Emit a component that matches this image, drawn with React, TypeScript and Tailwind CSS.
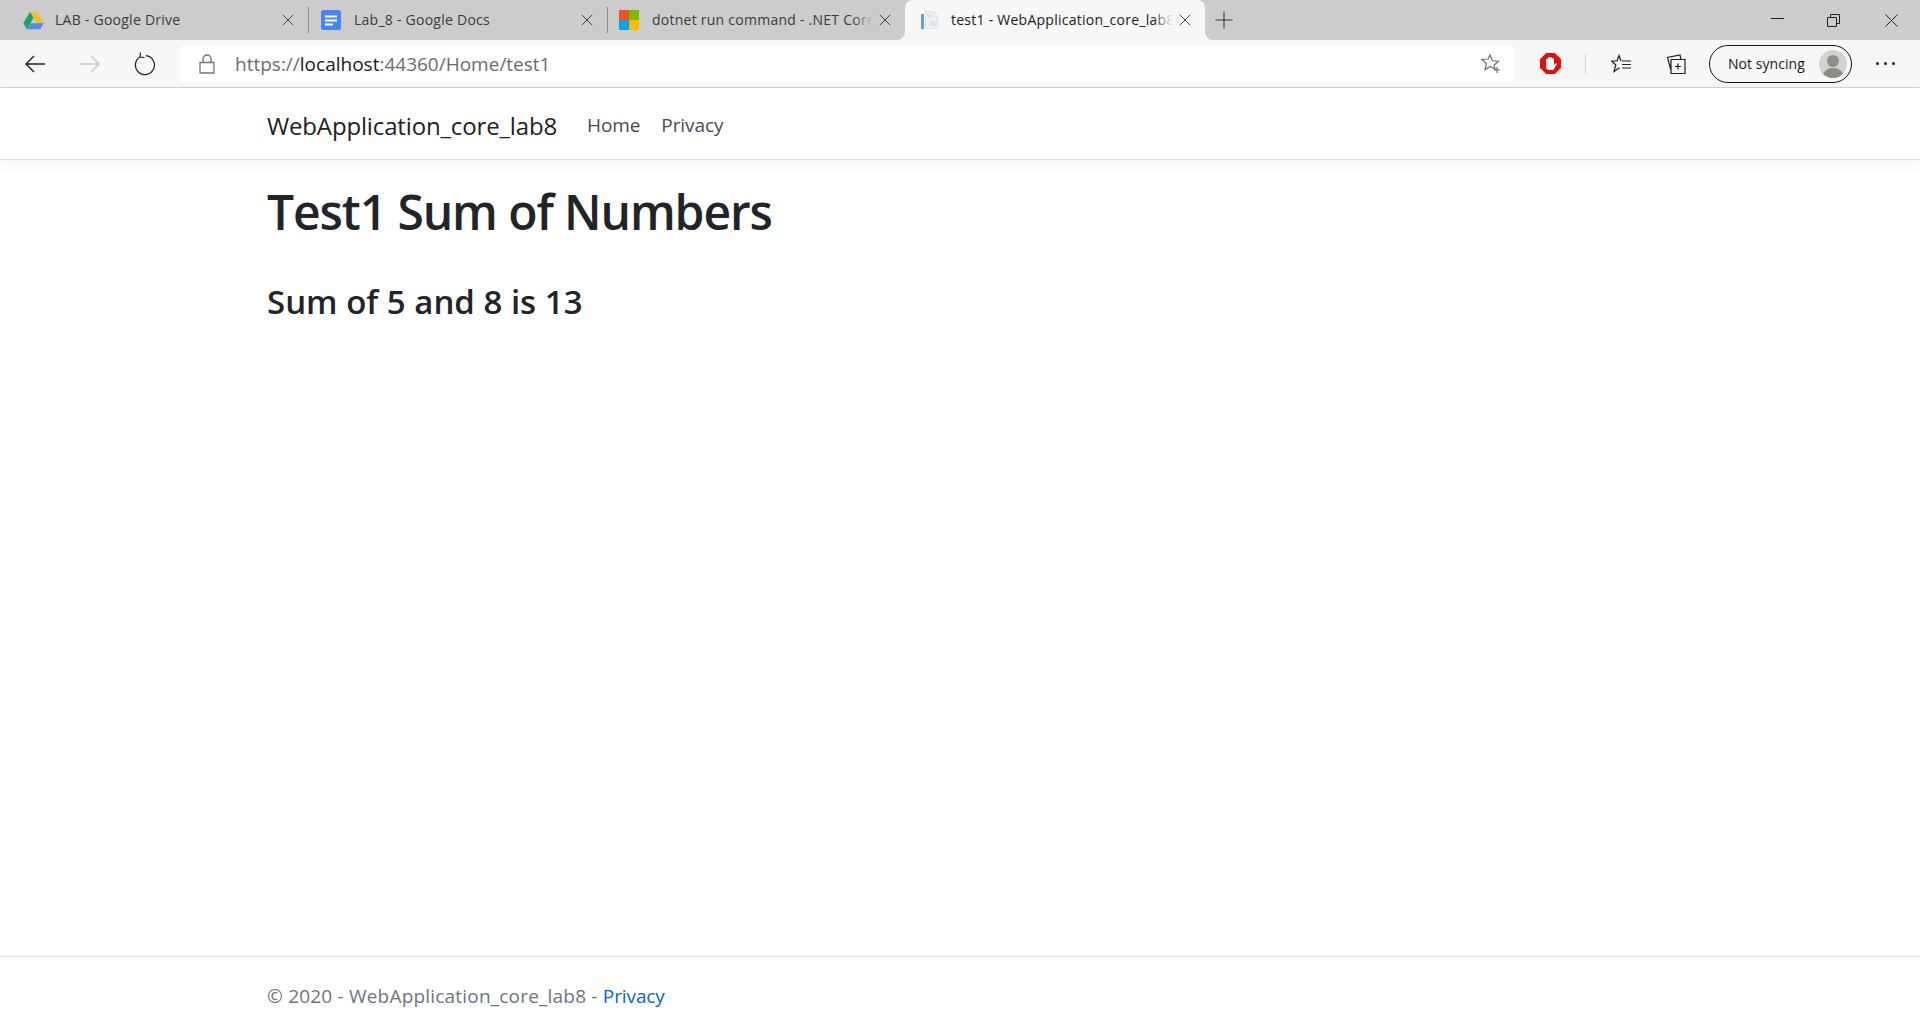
import { Plus, X } from "lucide-react";

const font = "font-['Open_Sans','Noto_Sans',sans-serif]";

function DriveIcon() {
  return (
    <svg width="21" height="19" viewBox="0 0 22 20">
      <path d="M7.3 1h7.4l7 11.8h-7.4z" fill="#f6c02c" />
      <path d="M7.300 1 .3 13l3.700 6.200 7-12z" fill="#1ea362" />
      <path d="M4 19.200h14l3.700-6.400H7.700z" fill="#4c8bf0" />
    </svg>
  );
}

function DocsIcon() {
  return (
    <svg width="20" height="20" viewBox="0 0 20 20">
      <rect width="20" height="20" rx="2.500" fill="#4285f4" />
      <path d="M4 5.500h12v2H4zM4 9.500h12v2H4zM4 13.500h8v2H4z" fill="#fff" />
    </svg>
  );
}

function MsIcon() {
  return (
    <svg width="20" height="20" viewBox="0 0 20 20">
      <rect width="10" height="10" fill="#f25022" />
      <rect x="10" width="10" height="10" fill="#7fba00" />
      <rect y="10" width="10" height="10" fill="#00a4ef" />
      <rect x="10" y="10" width="10" height="10" fill="#ffb900" />
    </svg>
  );
}

function PageIcon() {
  return (
    <svg width="19" height="20" viewBox="0 0 19 20">
      <path d="M5.500 1.500h8l4 3.500v13.500h-12z" fill="#eef0f3" stroke="#dfe3e8" />
      <rect x="1" y="4" width="3" height="15" fill="#5f9fd8" />
      <path d="M7 4h5v4H7zM10 11h6v5h-6z" fill="#dfe2e7" />
    </svg>
  );
}

function Tab({
  icon,
  title,
  active,
  size,
  slot,
}: {
  icon: React.ReactNode;
  title: string;
  active?: boolean;
  size: string;
  slot: string;
}) {
  return (
    <div className={`relative flex h-10 shrink-0 items-center pr-[10px] ${size} ${active ? "rounded-t-lg bg-[#f7f7f7]" : ""}`}>
      {active && (
        <>
          <div className="absolute bottom-0 -left-2 h-2 w-2 bg-[#f7f7f7]">
            <div className="h-2 w-2 rounded-br-lg bg-[#cccccc]" />
          </div>
          <div className="absolute -right-2 bottom-0 h-2 w-2 bg-[#f7f7f7]">
            <div className="h-2 w-2 rounded-bl-lg bg-[#cccccc]" />
          </div>
        </>
      )}
      <div className={`flex shrink-0 items-center ${slot}`}>{icon}</div>
      <div className="relative h-5 min-w-0 flex-1 overflow-hidden whitespace-nowrap text-[14px] leading-5 tracking-[0.25px] text-[#3b3b3b]">
        <span className={active ? "text-[#1a1a1a]" : ""}>{title}</span>
        <div className={`absolute inset-y-0 right-0 w-5 bg-gradient-to-r from-transparent ${active ? "to-[#f7f7f7]" : "to-[#cccccc]"}`} />
      </div>
      <X size={20} strokeWidth={1.100} className="ml-[2px] shrink-0 text-[#333333]" />
    </div>
  );
}

function Sep() {
  return <div className="h-[26px] w-px shrink-0 bg-[#8f8f8f]" />;
}

export default function App() {
  return (
    <div className={`flex h-[1022px] w-[1920px] flex-col overflow-hidden bg-white ${font}`}>
      {/* tab strip */}
      <div className="flex h-10 shrink-0 items-center bg-[#cccccc]">
        <Tab icon={<DriveIcon />} title="LAB - Google Drive" size="w-[308px]" slot="w-[55px] pl-[23px]" />
        <Sep />
        <Tab icon={<DocsIcon />} title="Lab_8 - Google Docs" size="w-[298px]" slot="w-[45px] pl-[12px]" />
        <Sep />
        <Tab icon={<MsIcon />} title="dotnet run command - .NET Core CLI" size="w-[297px]" slot="w-[44px] pl-[11px]" />
        <Tab icon={<PageIcon />} title="test1 - WebApplication_core_lab8" size="w-[300px]" slot="w-[46px] pl-[15px]" active />
        <Plus size={28} strokeWidth={0.9} className="ml-[5px] text-[#333333]" />
        <div className="ml-auto flex items-center pr-[22px] text-[#222222]">
          <svg width="13" height="13" viewBox="0 0 13 13" fill="none" stroke="currentColor">
            <path d="M0 4.500h13" />
          </svg>
          <svg className="ml-[43px]" width="13" height="13" viewBox="0 0 13 13" fill="none" stroke="currentColor">
            <path d="M.5 3.500h9v9h-9zM3.500 3.500v-3h9v9h-3" />
          </svg>
          <svg className="ml-[45px]" width="13" height="13" viewBox="0 0 13 13" fill="none" stroke="currentColor">
            <path d="M.5 .5l12 12M12.500 .5l-12 12" />
          </svg>
        </div>
      </div>

      {/* toolbar */}
      <div className="flex h-[48px] shrink-0 items-center border-b border-[#d2d2d2] bg-[#f7f7f7]">
        <div className="flex w-[180px] shrink-0 items-center pl-[24px]">
          <svg width="22" height="20" viewBox="0 0 22 20" fill="none" stroke="#1f1f1f" strokeWidth="1.400">
            <path d="M21 10H2M10 2l-8 8 8 8" />
          </svg>
          <svg className="ml-[33px]" width="22" height="20" viewBox="0 0 22 20" fill="none" stroke="#c8c8c8" strokeWidth="1.400">
            <path d="M1 10h19M12 2l8 8-8 8" />
          </svg>
          <svg className="ml-[33px]" width="22" height="24" viewBox="0 0 22 24" fill="none" stroke="#1f1f1f" strokeWidth="1.200">
            <path d="M6 5a9.500 9.500 0 1 0 6-1.300M6.500 .5 6 5l4.500 .5" />
          </svg>
        </div>
        <div className="flex h-[38px] w-[1335px] shrink-0 items-center rounded-[5px] bg-white">
          <svg className="ml-[19px]" width="16" height="20" viewBox="0 0 16 20" fill="none" stroke="#777777" strokeWidth="1.300">
            <path d="M1 8.500h14V19H1zM4 8.500V5a4 4 0 0 1 8 0v3.500" />
          </svg>
          <div className="ml-[20px] pt-[1px] text-[19px] leading-none text-[#6b6b6b]">
            https://<span className="text-[#1a1a1a]">localhost</span>:44360/Home/test1
          </div>
          <svg className="ml-auto mr-[13px]" width="22" height="22" viewBox="0 0 22 22" fill="none" stroke="#6f6f6f" strokeWidth="1.200">
            <path d="M10 2l2.400 5.800 6.200.5-4.700 4 1.300 4-5.200-2.900-5 3.300 1.500-6.200-4.700-4 6.200-.5zM14 17h6M17 14v6" />
          </svg>
        </div>
        <svg className="ml-[25px]" width="21" height="21" viewBox="0 0 21 21">
          <path d="M6.200 0h8.600L21 6.200v8.600L14.800 21H6.200L0 14.800V6.200z" fill="#e40c0c" />
          <path d="M6 9.500V6.500a1 1 0 0 1 2 0V5a1 1 0 0 1 2 0 1 1 0 0 1 2 0V6a1 1 0 0 1 2 0v6l1.500-1.500c1-.6 1.500.2 1 1L13.500 17H9c-2 0-3-1.500-3-3z" fill="#fff" />
        </svg>
        <div className="ml-[24px] h-[20px] w-px bg-[#d4d4d4]" />
        <svg className="ml-[25px]" width="21" height="20" viewBox="0 0 21 20" fill="none" stroke="#1f1f1f" strokeWidth="1.200">
          <path d="M10 7 8 1.500 6 7H.7l4.100 4L3 17.500l5.500-3.700M11 7h9M11 10.500h9M11 14h9" />
        </svg>
        <svg className="ml-[34px]" width="20" height="20" viewBox="0 0 20 20" fill="none" stroke="#1f1f1f" strokeWidth="1.200">
          <path d="M5 5.500h14v14H5zM9 12.500h6M12 9.500v6M5 16.500 1.500 3.500 14 1l1 4.500" />
        </svg>
        <div className="ml-[23px] flex h-[38px] w-[143px] items-center rounded-full border border-[#111111] pl-[18px] pr-[4px]">
          <span className="whitespace-nowrap text-[14px] tracking-[0.05px] text-[#1a1a1a]">Not syncing</span>
          <div className="ml-auto flex h-7 w-7 shrink-0 flex-col items-center justify-end overflow-hidden rounded-full bg-[#d4d2ce]">
            <div className="h-[12px] w-[12px] rounded-full bg-[#8f8c86]" />
            <div className="mt-[1px] h-[10px] w-[22px] rounded-t-full bg-[#8f8c86]" />
          </div>
        </div>
        <div className="ml-[24px] flex gap-[5px]">
          <div className="h-[3px] w-[3px] rounded-full bg-[#222222]" />
          <div className="h-[3px] w-[3px] rounded-full bg-[#222222]" />
          <div className="h-[3px] w-[3px] rounded-full bg-[#222222]" />
        </div>
      </div>

      {/* page navbar */}
      <nav className="flex h-[72px] shrink-0 items-center border-b border-[#dee2e6] bg-white pl-[267px] pt-[4px] shadow-[0_4px_12px_rgba(0,0,0,0.05)]">
        <a className="text-[24px] tracking-[-0.15px] text-[#212121]">WebApplication_core_lab8</a>
        <a className="ml-[30px] text-[19px] tracking-[-0.1px] text-[#4a4a4a]">Home</a>
        <a className="ml-[21px] text-[19px] tracking-[-0.1px] text-[#4a4a4a]">Privacy</a>
      </nav>

      {/* main */}
      <main className="flex-1 pl-[267px]">
        <h1 className="mt-[23px] text-[48px] font-semibold leading-[58px] tracking-[-1.100px] text-[#212529]">Test1 Sum of Numbers</h1>
        <h3 className="mt-[42px] text-[33px] font-semibold leading-[38px] text-[#212529]">Sum of 5 and 8 is 13</h3>
      </main>

      {/* footer */}
      <footer className="flex h-[66px] shrink-0 items-center border-t border-[#dee2e6] pl-[267px] pt-[13px] text-[19px] tracking-[0.2px] text-[#6c757d]">
        © 2020 - WebApplication_core_lab8 -&nbsp;<a className="tracking-[-0.1px] text-[#0366d6]">Privacy</a>
      </footer>
    </div>
  );
}
